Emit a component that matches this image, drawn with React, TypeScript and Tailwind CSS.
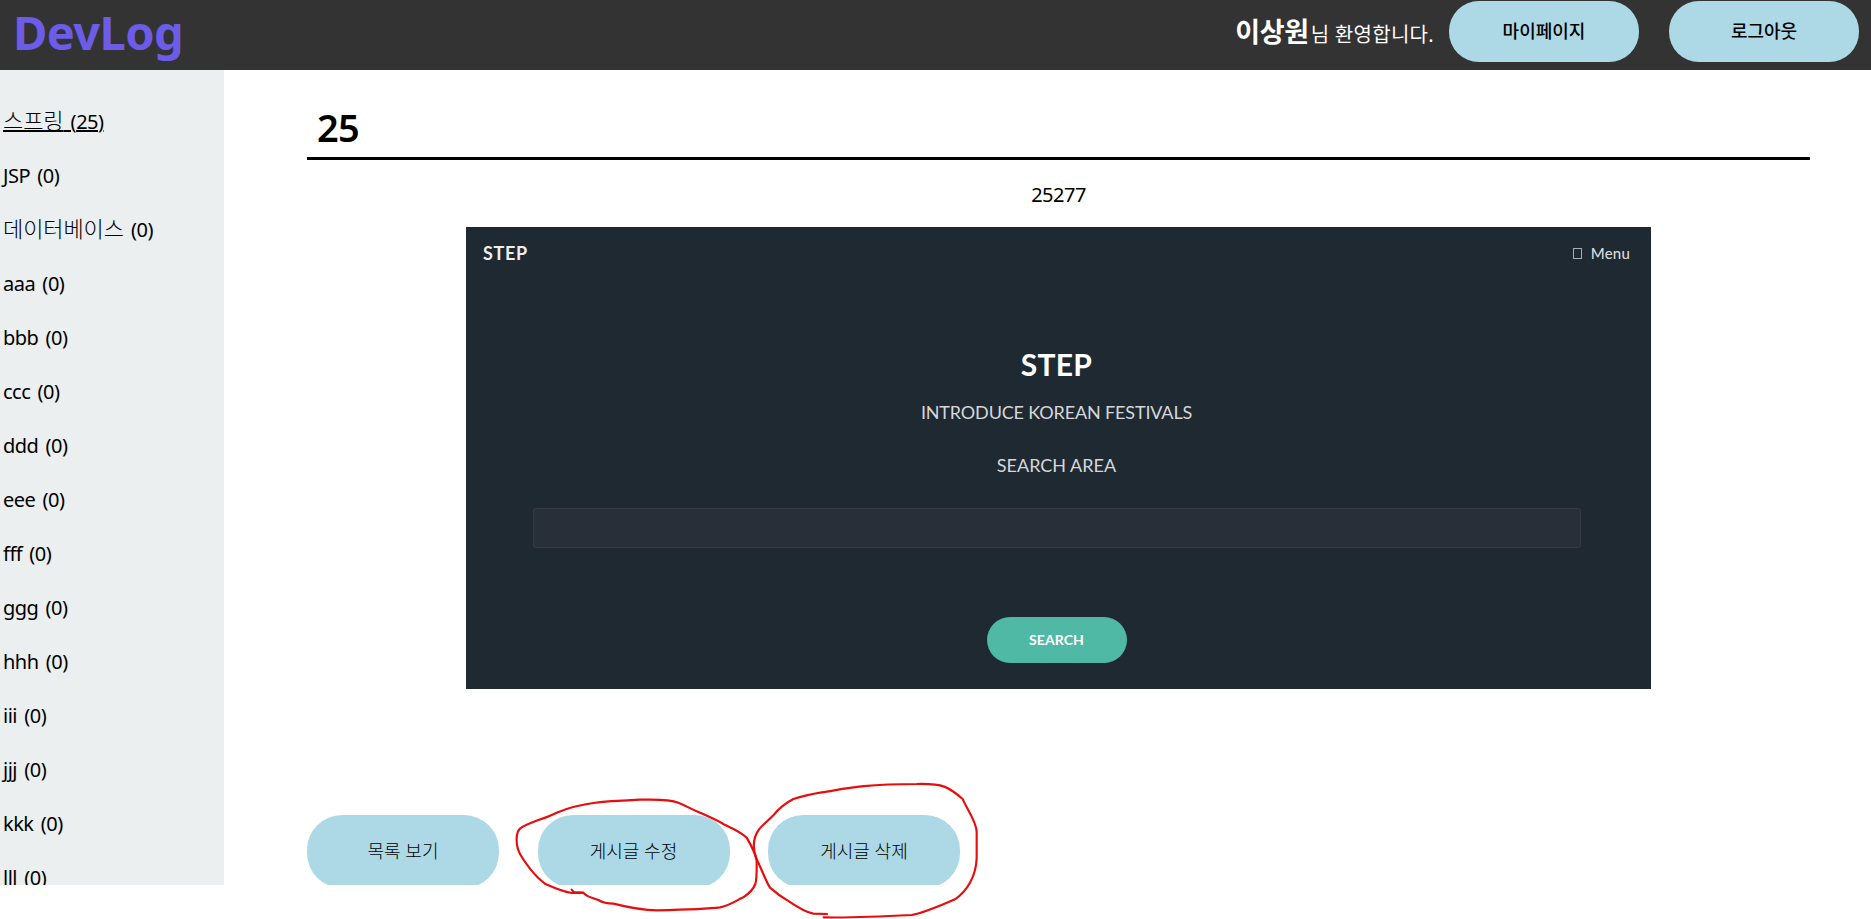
const categories: { name: string; count: number; active?: boolean; hangul?: boolean }[] = [
  { name: '스프링', count: 25, active: true, hangul: true },
  { name: 'JSP', count: 0 },
  { name: '데이터베이스', count: 0, hangul: true },
  { name: 'aaa', count: 0 },
  { name: 'bbb', count: 0 },
  { name: 'ccc', count: 0 },
  { name: 'ddd', count: 0 },
  { name: 'eee', count: 0 },
  { name: 'fff', count: 0 },
  { name: 'ggg', count: 0 },
  { name: 'hhh', count: 0 },
  { name: 'iii', count: 0 },
  { name: 'jjj', count: 0 },
  { name: 'kkk', count: 0 },
  { name: 'lll', count: 0 },
];

function Header() {
  return (
    <header className="flex h-[70px] shrink-0 items-start justify-between bg-[#333333] pl-[13px] pr-3">
      <h1 className="text-[47px] leading-[64px] font-bold tracking-[-0.6px] text-[#6c5ce7]">DevLog</h1>
      <div className="flex">
        <p className="mr-[15px] text-[20px] leading-[63px] text-white">
          <b className="text-[27px] tracking-[-0.4px]">이상원</b>
          <span className="pl-[2px] tracking-[0.3px]">님 환영합니다.</span>
        </p>
        <button className="mt-px mr-[30px] h-[61px] w-[190px] rounded-[30px] bg-[#add8e6] text-[18px] font-medium text-black">마이페이지</button>
        <button className="mt-px h-[61px] w-[190px] rounded-[30px] bg-[#add8e6] text-[18px] font-medium text-black">로그아웃</button>
      </div>
    </header>
  );
}

function Sidebar() {
  return (
    <nav className="w-[224px] shrink-0 bg-[#ebefef] pt-[25px]">
      <ul>
        {categories.map((c) => (
          <li key={c.name} className="h-[54px] pl-[3px] text-[20px] leading-[54px] tracking-[-0.5px] [word-spacing:2.5px] whitespace-pre text-black">
            <a className={c.active ? 'underline decoration-2 underline-offset-[1px]' : ''}>
              <span className={c.hangul ? 'text-[22px] leading-none font-light tracking-[-0.1px]' : ''}>{c.name}</span> ({c.count})
            </a>
          </li>
        ))}
      </ul>
    </nav>
  );
}

function FestivalBanner() {
  return (
    <section className="mx-auto flex h-[462px] w-[1185px] flex-col items-center bg-[#1f2932] pr-1 font-['Lato',sans-serif]">
      <div className="flex h-[52px] w-full items-center justify-between pl-[17px] pr-[17px]">
        <span className="text-[18px] font-bold tracking-[0.7px] text-[#eeeeee]">STEP</span>
        <span className="flex items-center text-[15px] font-medium tracking-[0.2px] text-[#d8dadc]">
          <i className="mr-[9px] block h-[11px] w-[9px] border border-[#a9adb2]" />
          Menu
        </span>
      </div>
      <h2 className="mt-[65px] text-[30px] leading-10 font-bold tracking-[0.3px] text-white">STEP</h2>
      <p className="mt-4 text-[18px] leading-6 tracking-[-0.15px] text-[#d5d7d9]">INTRODUCE KOREAN FESTIVALS</p>
      <p className="mt-[29px] text-[18px] leading-6 text-[#d5d7d9]">SEARCH AREA</p>
      <input className="mt-[31px] h-[40px] w-[1048px] shrink-0 rounded-[3px] border border-[#353b46] bg-[#292f39]" />
      <button className="mt-[69px] h-[46px] w-[140px] shrink-0 rounded-full bg-[#50b9a5] pb-[2px] text-[14px] font-bold tracking-[0.1px] text-white">SEARCH</button>
    </section>
  );
}

const actions = ['목록 보기', '게시글 수정', '게시글 삭제'];

function Post() {
  return (
    <main className="ml-[83px] w-[1503px]">
      <h2 className="h-[90px] border-b-[3px] border-black pl-[10px] pt-[31px] text-[38px] leading-[52px] font-semibold tracking-[-0.7px]">25</h2>
      <p className="h-[67px] pt-[20px] text-center text-[20px] leading-[30px] tracking-[-0.5px]">25277</p>
      <FestivalBanner />
      <div className="mt-[126px] flex gap-[38.5px]">
        {actions.map((label) => (
          <button key={label} className="h-[73px] w-[192px] rounded-[35px] bg-[#add8e6] pb-px text-[18px] font-light text-black">
            {label}
          </button>
        ))}
      </div>
    </main>
  );
}

function PenMarks() {
  return (
    <svg className="pointer-events-none absolute top-[770px] left-[290px]" width="700" height="149" viewBox="0 0 2100 447" fill="none" stroke="#e80c0c" strokeWidth="6.5" strokeLinecap="round" strokeLinejoin="round">
      <path d="M845 359L851 366L880 368L845 369C810 362 795 354 765 341C730 315 700 270 690 252C677 228 676 188 690 176C712 158 760 148 800 128C880 95 960 93 1050 89C1090 89 1135 86 1165 98C1190 108 1205 118 1225 126C1250 137 1280 150 1300 162C1330 176 1355 187 1370 203C1380 220 1396 250 1400 272C1400 300 1401 325 1396 342C1390 358 1375 372 1360 382C1335 394 1315 408 1290 412C1250 417 1180 419 1100 421C1050 421 1010 411 970 401C950 401 940 399 925 390C905 382 893 382 880 368" />
      <path d="M1611 432L1570 431C1545 427 1520 410 1498 395C1475 382 1460 371 1440 353C1428 335 1416 300 1400 268C1388 238 1388 205 1407 178C1420 162 1435 152 1450 136C1465 117 1485 100 1510 87C1540 77 1570 71 1595 67C1650 60 1700 42 1880 42C1960 40 1975 50 2018 87C2025 107 2060 155 2060 185L2060 265C2058 320 2030 365 1995 388C1940 412 1890 432 1865 435C1750 441 1690 444 1601 442" />
    </svg>
  );
}

export default function App() {
  return (
    <div className="relative flex h-[919px] w-[1871px] flex-col overflow-hidden bg-white font-['Noto_Sans','Noto_Sans_CJK_KR',sans-serif] text-black">
      <Header />
      <div className="flex h-[815px] overflow-hidden">
        <Sidebar />
        <Post />
      </div>
      <PenMarks />
    </div>
  );
}
